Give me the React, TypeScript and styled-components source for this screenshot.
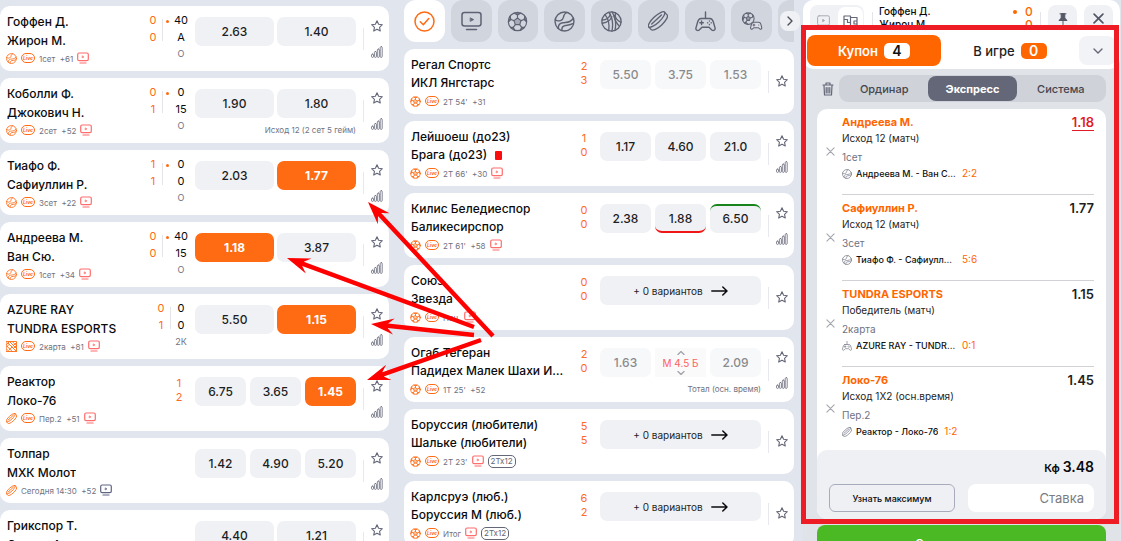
import React from 'react';
import styled, { createGlobalStyle, css } from 'styled-components';

const c = {
  page: '#e1e5ee',
  orange: '#ff6b13',
  deepOrange: '#ff6600',
  grey: '#6f7282',
  icon: '#646777',
  chip: '#f0f1f5',
  mark: '#ff0000',
};

const Global = createGlobalStyle`
  * { box-sizing: border-box; }
  body { margin: 0; background: ${c.page}; color: #0b0b0d; font-family: Inter, "Liberation Sans", sans-serif; font-size: 12px; }
  button, input { font: inherit; color: inherit; border: 0; margin: 0; padding: 0; background: none; }
  button { cursor: pointer; }
  svg { display: block; flex: none; fill: none; stroke: currentColor; stroke-linecap: round; stroke-linejoin: round; }
`;

/* ---------- icons ---------- */

type IconProps = { size?: number; w?: number };

const Tennis = ({ size = 11, w = 1.8 }: IconProps) => (
  <svg width={size} height={size} viewBox="0 0 24 24" strokeWidth={w}>
    <circle cx="12" cy="12" r="10.800" />
    <path d="M1.500 10c1.500 1.200 4 1.600 6.500.6 3-1.200 2.600-3.600 3.400-5.600.5-1.400 1.600-2.600 3.400-3.400" />
    <path d="M5 20c-.3-3.500 1.500-6 5-6.600 3-.5 5.500-.2 8-1.400 1.800-.9 3-2 4-3.400" />
    <path d="M9 22.300c-.3-3 1-5.300 4-5.800 3.500-.5 6-.5 8.500-2" />
  </svg>
);

const Soccer = ({ size = 11, w = 1.8 }: IconProps) => (
  <svg width={size} height={size} viewBox="0 0 24 24" strokeWidth={w}>
    <circle cx="12" cy="12" r="10.500" />
    <path d="M12 8l4 3-1.500 4.600h-5L8 11z" fill="currentColor" fillOpacity=".35" />
    <path d="M12 8V4.500M16 11l3.600-1.300M14.500 15.600l2.300 3.100M9.500 15.600l-2.300 3.100M8 11L4.400 9.700" />
    <path d="M8.500 2.500L12 4.500l3.500-2M20.500 6l-.9 3.700 2.700 2.800M19.800 18.700l-3-.1-1.600 3.400M8.800 22l-1.600-3.400-3 .1M1.700 12.500l2.700-2.800L3.500 6" fill="currentColor" />
  </svg>
);

const Basketball = ({ size = 21, w = 1.5 }: IconProps) => (
  <svg width={size} height={size} viewBox="0 0 24 24" strokeWidth={w}>
    <circle cx="12" cy="12" r="11" />
    <path d="M9 1.500c4 5.500 5 14 3.500 21.400M12.500 1c4 6 5 14 3.500 21" />
    <path d="M1.200 10.500C6 10 9.800 7 10.800 3.500M1.300 14c6-.8 10-3.500 11-7.500" />
    <path d="M4.500 4.200c4 4.500 5.300 11 4.300 18.300M16.500 2c-1 4.500 1 8.500 6.300 11M14.800 5c.5 5 3 9 6.200 12.500" />
  </svg>
);

const Puck = ({ size = 11, w = 1.8 }: IconProps) => (
  <svg width={size} height={size} viewBox="0 0 24 24" strokeWidth={w}>
    <g transform="rotate(-43 12 12)">
      <ellipse cx="12" cy="9.500" rx="13" ry="4" />
      <path d="M-1 9.500v4.500c0 2.500 5.800 4.500 13 4.500s13-2 13-4.500V9.500" />
      <path d="M4 9.500h16" />
    </g>
  </svg>
);

const Gamepad = ({ size = 20, w = 1.6 }: IconProps) => (
  <svg width={size} height={size} viewBox="0 0 24 24" strokeWidth={w}>
    <path d="M12 8.500V1M7 8.500h10c2 0 3.200 1.500 3.900 3.800l2 7c.6 2.400-1.900 4-3.700 2.400L16 18.500H8l-3.200 3.200C3 23.300.5 21.700 1.100 19.300l2-7C3.800 10 5 8.500 7 8.500z" />
    <path d="M7.500 11.500v4M5.500 13.500h4M16.500 11.400v.1M16.500 15.500v.1M14.500 13.500v.1M18.500 13.500v.1" />
  </svg>
);

const Mixed = () => (
  <svg width="22" height="20" viewBox="0 0 26 24" strokeWidth="1.3">
    <circle cx="8.500" cy="9" r="7" />
    <path d="M8.500 6.500l2.400 1.800-1 2.900H7.100l-1-2.900zM8.500 6.500V4M11 8.300l2.500-.8M7.100 11.200l-1.500 2M6 8.300l-2.500-.8M6 2.500L8.500 4 11 2.500M2 11l1.500-3.500L3 5M4 14.500l1.600-1.300 2 2.500M14 5l-.5 2.500" fill="currentColor" fillOpacity=".5" />
    <path d="M15 13.500h6c1.500 0 2.200.8 2.600 2.300l1.100 4.200c.3 1.500-1.200 2.400-2.300 1.400L20.500 20h-5l-1.900 1.400c-1.100 1-2.600.1-2.300-1.400l1.100-4.200c.4-1.500 1.100-2.300 2.600-2.300zM15.300 15.500v2.400M14.100 16.700h2.400M21 16.700h.1" fill={c.chip} fillOpacity=".35" />
  </svg>
);

const Tv = ({ size = 12, w = 1.2 }: IconProps) => (
  <svg width={size} height={size} viewBox="0 0 12 12" strokeWidth={w}>
    <rect x=".7" y="1" width="10.600" height="7.600" rx="1.400" />
    <path d="M3 11h6" />
    <path d="M5.500 4l1.500.9-1.500.9z" fill="currentColor" strokeWidth=".6" />
  </svg>
);

const Woven = () => (
  <svg width="11" height="11" viewBox="0 0 11 11" strokeWidth=".9">
    <rect x=".5" y=".5" width="10" height="10" />
    <path d="M.5 3.500l3-3M.5 6l2.500-2.500M2 2l8.500 8.500M4 1l6.500 6.500M6.500.8l4 4M.8 5l5.500 5.500M.5 8l2.500 2.500M7 5l3.500-3.500M8 7l2.500-2.500M3 9l3-3" />
  </svg>
);

const Star = () => (
  <svg width="12" height="12" viewBox="0 0 24 24" strokeWidth="2.200">
    <path d="M12 1.500l3.200 7 7.500.9-5.600 5.200 1.500 7.500L12 18.300l-6.600 3.800 1.500-7.500L1.300 9.400l7.500-.9z" />
  </svg>
);

const Bars = () => (
  <svg width="12" height="12" viewBox="0 0 12 12" strokeWidth=".8">
    <rect x=".5" y="8" width="2" height="3.400" rx="1" />
    <rect x="3.400" y="5.500" width="2" height="5.900" rx="1" />
    <rect x="6.300" y="3" width="2" height="8.400" rx="1" />
    <rect x="9.200" y=".6" width="2" height="10.800" rx="1" />
  </svg>
);

const Check = () => (
  <svg width="21" height="21" viewBox="0 0 21 21" strokeWidth="1.500">
    <circle cx="10.500" cy="10.500" r="9.500" />
    <path d="M6.300 10.800l3 3 5.500-6.300" />
  </svg>
);

const BigTv = () => (
  <svg width="21" height="20" viewBox="0 0 21 20" strokeWidth="1.500">
    <rect x="1" y="1.500" width="19" height="13.500" rx="2.500" />
    <path d="M5.500 18.500h10" />
    <path d="M9.500 7l3.200 1.600-3.200 1.600z" fill="currentColor" strokeWidth=".8" />
  </svg>
);

const Chevron = ({ d, w = 8, h = 12 }: { d: string; w?: number; h?: number }) => (
  <svg width={w} height={h} viewBox={`0 0 ${w} ${h}`} strokeWidth="1.400">
    <path d={d} />
  </svg>
);

const Arrow = () => (
  <svg width="17" height="10" viewBox="0 0 17 10" strokeWidth="1.500">
    <path d="M.8 5h15.200M11.800 1l4.200 4-4.200 4" />
  </svg>
);

const Trash = () => (
  <svg width="12" height="14" viewBox="0 0 12 14" strokeWidth="1.200">
    <path d="M1 3h10M4 2.800V1h4v1.800M2 3.200l.5 9.800h7l.5-9.800M4.200 5.500v5.500M6 5.500v5.500M7.800 5.500v5.500" />
  </svg>
);

const Pin = () => (
  <svg width="10" height="12" viewBox="0 0 10 12" strokeWidth="1">
    <path d="M2 .8h6M3.200 1v4L1 7.500h8L6.800 5V1z" fill="currentColor" />
    <path d="M5 7.500v4" />
  </svg>
);

const Cross = ({ size = 10, w = 1.6 }: IconProps) => (
  <svg width={size} height={size} viewBox="0 0 10 10" strokeWidth={w}>
    <path d="M1 1l8 8M9 1L1 9" />
  </svg>
);

const Pitch = () => (
  <svg width="15" height="12" viewBox="0 0 15 12" strokeWidth="1.200">
    <path d="M1 11V1h6.500v10M7.500 2.500h6.500V11M1 4.500h3.500v3H7.500M14 6h-3v3h3" />
  </svg>
);

const VideoBox = () => (
  <svg width="13" height="11" viewBox="0 0 13 11" strokeWidth="1">
    <rect x=".6" y=".8" width="11.800" height="9.400" rx="1.500" />
    <path d="M6 4.500l1.500 1L6 6.500z" fill="currentColor" />
  </svg>
);

/* ---------- page ---------- */

const Page = styled.div`
  position: relative;
  display: grid;
  grid-template-columns: minmax(0, 404fr) minmax(0, 399fr) 318px;
  height: 100vh;
  overflow: hidden;
`;

const Column = styled.main<{ $gutter: number; $top: number }>`
  min-width: 0;
  padding: ${(p) => p.$top}px ${(p) => p.$gutter}px 0 0;
`;

const Cards = styled.div`
  display: grid;
  gap: 7px;
`;

const Card = styled.article`
  display: grid;
  grid-template-columns: minmax(0, 1fr) auto 161px 33px;
  height: 65px;
  background: #fff;
  border-radius: 10px;
`;

const Info = styled.div<{ $dense?: boolean }>`
  display: grid;
  grid-template-rows: 44px 16px;
  min-width: 0;
  padding-left: 7px;
  line-height: ${(p) => (p.$dense ? 18 : 19)}px;
`;

const Teams = styled.div<{ $dense?: boolean }>`
  padding: ${(p) => (p.$dense ? 7 : 6)}px 12px 0 0;
  min-width: 0;
  font-size: 12px;
  font-weight: 500;
`;

const Team = styled.div`
  display: flex;
  align-items: center;
  gap: 8px;
  > span { overflow: hidden; text-overflow: ellipsis; white-space: nowrap; }
`;

const RedCard = styled.i`
  width: 7px;
  height: 9px;
  border-radius: 1px;
  background: #fb0d0d;
`;

const Meta = styled.div`
  display: flex;
  align-items: center;
  gap: 4px;
  margin-left: -1px;
  color: ${c.orange};
  font-size: 8px;
  line-height: 16px;
  white-space: nowrap;
`;

const Live = styled.span`
  width: 14px;
  height: 10px;
  border: 1px solid ${c.orange};
  border-radius: 5px;
  font-size: 5px;
  line-height: 8px;
  font-weight: 700;
  font-style: italic;
  text-align: center;
`;

const MetaText = styled.span`
  padding-top: 2px;
  color: ${c.grey};
  white-space: pre;
`;

const TvTone = styled.span<{ $dark?: boolean }>`
  color: ${(p) => (p.$dark ? '#5d6583' : '#ff6d6d')};
`;

const Tag = styled.span`
  height: 13px;
  padding: 0 2px;
  border: 1px solid ${c.icon};
  border-radius: 5px;
  color: ${c.icon};
  line-height: 11px;
`;

const Scores = styled.div`
  display: flex;
  padding: 6px 4px 0 0;
  font-size: 11px;
  line-height: 17px;
  text-align: center;
`;

const Games = styled.div`
  width: 14px;
  margin-right: 2px;
  color: ${c.orange};
`;

const Rule = styled.i`
  width: 1px;
  height: 22px;
  margin-top: 7px;
  background: #e3e5ea;
`;

const Serve = styled.i`
  width: 8px;
  padding: 8px 0 0 3px;
  &::before { content: ''; display: block; width: 3px; height: 3px; border-radius: 50%; background: ${c.orange}; }
`;

const Points = styled.div`
  width: 20px;
  small { display: block; font-size: 9px; color: ${c.grey}; line-height: 15px; }
`;

const Totals = styled.div`
  width: 24px;
  padding: 10px 8px 0 0;
  color: #ff6a2a;
  font-size: 11px;
  line-height: 14px;
  text-align: center;
`;

const Market = styled.div`
  padding-top: 11px;
`;

const Odds = styled.div<{ $three?: boolean }>`
  display: flex;
  gap: ${(p) => (p.$three ? 4 : 3)}px;
`;

type Tone = 'on' | 'off' | 'up' | 'down';

const Odd = styled.button<{ $tone?: Tone }>`
  flex: 1 1 0;
  height: 29px;
  border-radius: 7px;
  background: ${c.chip};
  font-size: 12px;
  font-weight: 500;
  color: #1d1e24;
  ${(p) => p.$tone === 'on' && css`background: ${c.orange}; color: #fff; font-weight: 700;`}
  ${(p) => p.$tone === 'off' && css`background: #f7f8fa; color: #8a8a8c;`}
  ${(p) => p.$tone === 'up' && css`border-top: 2px solid #17851c; border-bottom: 2px solid ${c.chip};`}
  ${(p) => p.$tone === 'down' && css`border-bottom: 2px solid #f01616; border-top: 2px solid ${c.chip};`}
`;

const Total = styled.div`
  display: flex;
  flex: 1 1 0;
  flex-direction: column;
  align-items: center;
  justify-content: center;
  height: 29px;
  background: #fafafa;
  color: #ff6262;
  font-size: 10px;
  line-height: 16px;
  svg { color: #a3a5ad; }
`;

const More = styled.button`
  display: flex;
  align-items: center;
  justify-content: center;
  gap: 8px;
  width: 100%;
  height: 29px;
  border-radius: 7px;
  background: ${c.chip};
  color: #1d1e24;
  font-size: 10px;
  svg { color: #0b0b0d; }
`;

const Note = styled.div`
  margin-top: 6px;
  color: ${c.grey};
  font-size: 8px;
  line-height: 12px;
  text-align: right;
  white-space: nowrap;
`;

const Actions = styled.div`
  display: grid;
  grid-template-columns: 1px 12px;
  column-gap: 7px;
  padding: 22px 0 0 7px;
  color: ${c.icon};
`;

const ActionRule = styled.i`
  height: 22px;
  background: #e7e9ee;
`;

const Stack = styled.div<{ $single?: boolean }>`
  display: flex;
  flex-direction: column;
  gap: 14px;
  margin-top: ${(p) => (p.$single ? 4 : -8)}px;
`;

type Row = {
  teams: [string, string];
  sport: 'tennis' | 'soccer' | 'puck' | 'esport';
  text: string;
  live?: boolean;
  tv?: 'live' | 'dark';
  tag?: boolean;
  red?: boolean;
  games?: [string, string];
  serve?: boolean;
  points?: [string, string, string];
  totals?: [string, string];
  odds?: [string, Tone?][];
  total?: string;
  note?: string;
  single?: boolean;
};

const sportIcon = { tennis: <Tennis />, soccer: <Soccer />, puck: <Puck />, esport: <Woven /> };

const Match = ({ r, dense }: { r: Row; dense?: boolean }) => (
  <Card>
    <Info $dense={dense}>
      <Teams $dense={dense}>
        <Team><span>{r.teams[0]}</span></Team>
        <Team><span>{r.teams[1]}</span>{r.red && <RedCard />}</Team>
      </Teams>
      <Meta>
        {sportIcon[r.sport]}
        {r.live !== false && <Live>Live</Live>}
        <MetaText>{r.text}</MetaText>
        {r.tv && <TvTone $dark={r.tv === 'dark'}><Tv /></TvTone>}
        {r.tag && <Tag>2Тх12</Tag>}
      </Meta>
    </Info>
    {r.games && r.points ? (
      <Scores>
        <Games><div>{r.games[0]}</div><div>{r.games[1]}</div></Games>
        <Rule />
        {r.serve && <Serve />}
        <Points><div>{r.points[0]}</div><div>{r.points[1]}</div><small>{r.points[2]}</small></Points>
      </Scores>
    ) : (
      <Totals>{r.totals?.map((t, i) => <div key={i}>{t}</div>)}</Totals>
    )}
    <Market>
      {r.odds ? (
        <Odds $three={r.odds.length === 3 || !!r.total}>
          {r.odds.map(([v, tone], i) => (
            <React.Fragment key={i}>
              {i === 1 && r.total && (
                <Total>
                  <Chevron w={8} h={4} d="M1 3.500l3-3 3 3" />
                  {r.total}
                  <Chevron w={8} h={4} d="M1 .5l3 3 3-3" />
                </Total>
              )}
              <Odd $tone={tone}>{v}</Odd>
            </React.Fragment>
          ))}
        </Odds>
      ) : (
        <More>+ 0 вариантов <Arrow /></More>
      )}
      {r.note && <Note>{r.note}</Note>}
    </Market>
    <Actions>
      <ActionRule />
      <Stack $single={r.single}>
        <button aria-label="В избранное"><Star /></button>
        {!r.single && <button aria-label="Статистика"><Bars /></button>}
      </Stack>
    </Actions>
  </Card>
);

const left: Row[] = [
  { teams: ['Гоффен Д.', 'Жирон М.'], sport: 'tennis', text: '1сет  +61', tv: 'live', games: ['0', '0'], serve: true, points: ['40', 'А', 'О'], odds: [['2.63'], ['1.40']] },
  { teams: ['Коболли Ф.', 'Джокович Н.'], sport: 'tennis', text: '2сет  +52', tv: 'live', games: ['0', '1'], serve: true, points: ['0', '15', 'О'], odds: [['1.90'], ['1.80']], note: 'Исход 12 (2 сет 5 гейм)' },
  { teams: ['Тиафо Ф.', 'Сафиуллин Р.'], sport: 'tennis', text: '3сет  +22', tv: 'live', games: ['1', '1'], serve: true, points: ['0', '0', 'О'], odds: [['2.03'], ['1.77', 'on']] },
  { teams: ['Андреева М.', 'Ван Сю.'], sport: 'tennis', text: '1сет  +34', tv: 'live', games: ['0', '0'], serve: true, points: ['40', '15', 'О'], odds: [['1.18', 'on'], ['3.87']] },
  { teams: ['AZURE RAY', 'TUNDRA ESPORTS'], sport: 'esport', text: '2карта  +81', tv: 'live', games: ['0', '1'], points: ['0', '0', '2К'], odds: [['5.50'], ['1.15', 'on']] },
  { teams: ['Реактор', 'Локо-76'], sport: 'puck', text: 'Пер.2  +51', tv: 'live', totals: ['1', '2'], odds: [['6.75'], ['3.65'], ['1.45', 'on']] },
  { teams: ['Толпар', 'МХК Молот'], sport: 'puck', text: 'Сегодня 14:30  +52', live: false, tv: 'dark', odds: [['1.42'], ['4.90'], ['5.20']] },
  { teams: ['Грикспор Т.', 'Сонего А.'], sport: 'tennis', text: '', live: false, odds: [['4.40'], ['1.21']] },
];

const middle: Row[] = [
  { teams: ['Регал Спортс', 'ИКЛ Янгстарс'], sport: 'soccer', text: "2Т 54'  +31", totals: ['2', '3'], odds: [['5.50', 'off'], ['3.75', 'off'], ['1.53', 'off']], single: true },
  { teams: ['Лейшоеш (до23)', 'Брага (до23)'], red: true, sport: 'soccer', text: "2Т 66'  +30", tv: 'live', totals: ['1', '0'], odds: [['1.17'], ['4.60'], ['21.0']] },
  { teams: ['Килис Беледиеспор', 'Баликесирспор'], sport: 'soccer', text: "2Т 61'  +58", tv: 'live', totals: ['0', '0'], odds: [['2.38'], ['1.88', 'down'], ['6.50', 'up']] },
  { teams: ['Союз', 'Звезда'], sport: 'soccer', text: 'Нач.', tv: 'live', totals: ['0', '0'], single: true },
  { teams: ['Огаб Тегеран', 'Падидех Малек Шахи Илам'], sport: 'soccer', text: "1Т 25'  +52", totals: ['2', '0'], odds: [['1.63', 'off'], ['2.09', 'off']], total: 'М 4.5 Б', note: 'Тотал (осн. время)' },
  { teams: ['Боруссия (любители)', 'Шальке (любители)'], sport: 'soccer', text: "2Т 23'", tv: 'live', tag: true, totals: ['5', '5'], single: true },
  { teams: ['Карлсруэ (люб.)', 'Боруссия М (люб.)'], sport: 'soccer', text: 'Итог', tv: 'live', tag: true, totals: ['6', '2'], single: true },
];

/* ---------- sports strip ---------- */

const Strip = styled.nav`
  position: relative;
  margin-bottom: 7px;
`;

const StripClip = styled.div`
  overflow: hidden;
`;

const StripRow = styled.div`
  display: grid;
  grid-template-columns: repeat(9, 1fr);
  gap: 6px;
  width: calc(100% + 25px);
`;

const SportTab = styled.button<{ $on?: boolean }>`
  display: grid;
  place-items: center;
  height: 42px;
  border-radius: 12px;
  background: ${(p) => (p.$on ? '#fff' : '#d1d5de')};
  color: ${(p) => (p.$on ? c.orange : '#5f6272')};
`;

const NextButton = styled.button`
  position: absolute;
  right: -6px;
  top: 11px;
  display: grid;
  place-items: center;
  width: 20px;
  height: 20px;
  border-radius: 8px;
  background: #f0f1f5;
  color: #4c4f5c;
`;

/* ---------- coupon ---------- */

const Side = styled.aside`
  display: flex;
  flex-direction: column;
  margin-right: 1px;
  min-height: 0;
`;

const Topbar = styled.header`
  display: flex;
  flex: none;
  height: 28px;
  padding: 5px 7px 0;
  overflow: hidden;
  background: #fff;
  border-radius: 10px 10px 0 0;
`;

const Toggle = styled.div`
  display: flex;
  width: 54px;
  height: 30px;
  margin-right: 3px;
  border-radius: 8px;
  background: ${c.chip};
`;

const ToggleItem = styled.button<{ $on?: boolean }>`
  display: flex;
  align-items: flex-start;
  justify-content: center;
  flex: 1;
  margin: 2px 1px;
  padding-top: 8px;
  border-radius: 7px;
  background: ${(p) => (p.$on ? '#fff' : 'transparent')};
  color: ${(p) => (p.$on ? c.icon : '#a9abb5')};
`;

const TopRule = styled.i`
  width: 1px;
  margin: 7px 0 0 5px;
  background: #e3e5ea;
`;

const TopTeams = styled.div`
  flex: 1;
  padding-left: 6px;
  font-size: 10px;
  font-weight: 500;
  line-height: 13px;
`;

const TopScore = styled.div`
  display: grid;
  grid-template-columns: 12px 10px;
  align-content: start;
  align-items: center;
  color: ${c.deepOrange};
  font-size: 12px;
  font-weight: 500;
  line-height: 13px;
  i { width: 4px; height: 4px; border-radius: 50%; background: ${c.deepOrange}; }
  span { grid-column: 2; }
`;

const TopButton = styled.button`
  display: flex;
  justify-content: center;
  width: 29px;
  height: 30px;
  padding-top: 8px;
  margin-left: 7px;
  border-radius: 8px;
  background: ${c.chip};
  color: #555867;
`;

const Coupon = styled.section`
  position: relative;
  background: #e0e3e8;
`;

const Frame = styled.div`
  position: absolute;
  inset: -3px 1px -5px -2px;
  border: 5px solid #ee1c25;
  pointer-events: none;
`;

const CouponTabs = styled.div`
  display: grid;
  grid-template-columns: 134px 1fr 37px;
  align-items: center;
  height: 41px;
  padding: 4px 4px 0;
  background: #fff;
  border-radius: 0 0 10px 10px;
`;

const CouponTab = styled.button<{ $on?: boolean }>`
  display: flex;
  align-items: center;
  justify-content: center;
  gap: 6px;
  height: 31px;
  border-radius: 8px;
  background: ${(p) => (p.$on ? c.deepOrange : 'transparent')};
  color: ${(p) => (p.$on ? '#fff' : '#1d1e24')};
  font-size: 13px;
  font-weight: ${(p) => (p.$on ? 600 : 500)};
`;

const Count = styled.span<{ $on?: boolean }>`
  width: 26px;
  height: 16px;
  border-radius: 5px;
  background: ${(p) => (p.$on ? '#fff' : c.deepOrange)};
  color: ${(p) => (p.$on ? '#111' : '#fff')};
  font-size: 14px;
  line-height: 16px;
  font-weight: 600;
`;

const Collapse = styled.button`
  display: grid;
  place-items: center;
  height: 29px;
  border-radius: 8px;
  background: #f2f3f6;
  color: ${c.icon};
`;

const Kinds = styled.div`
  display: flex;
  align-items: center;
  gap: 5px;
  padding: 6px 14px 7px 19px;
  color: ${c.icon};
`;

const Segments = styled.div`
  display: grid;
  flex: 1;
  grid-template-columns: repeat(3, 1fr);
  height: 27px;
  padding: 1px;
  border-radius: 9px;
  background: #cfd2d8;
`;

const Segment = styled.button<{ $on?: boolean }>`
  border-radius: 8px;
  background: ${(p) => (p.$on ? '#646777' : 'transparent')};
  color: ${(p) => (p.$on ? '#fff' : '#44464f')};
  font-size: 11px;
  font-weight: ${(p) => (p.$on ? 700 : 500)};
`;

const Slip = styled.div`
  margin: 0 14px;
  border-radius: 10px;
  overflow: hidden;
  background: #fff;
`;

const Bet = styled.div`
  display: grid;
  grid-template-columns: 25px minmax(0, 1fr);
  padding-right: 12px;
`;

const Remove = styled.button`
  padding: 0 0 1px 9px;
  color: #a3a5ad;
`;

const BetBody = styled.div<{ $last?: boolean }>`
  height: ${(p) => (p.$last ? 83 : 86)}px;
  padding-top: 5px;
  border-bottom: 1px solid ${(p) => (p.$last ? 'transparent' : '#d0d2d5')};
  font-size: 10px;
`;

const BetHead = styled.div`
  display: flex;
  justify-content: space-between;
  align-items: flex-start;
  color: ${c.deepOrange};
  font-size: 11px;
  line-height: 16px;
  font-weight: 700;
`;

const Price = styled.span<{ $hot?: boolean }>`
  color: ${(p) => (p.$hot ? '#e01b26' : '#1d1e24')};
  font-size: 13px;
  font-weight: 600;
  border-bottom: 1px solid ${(p) => (p.$hot ? '#e01b26' : 'transparent')};
`;

const BetLine = styled.div`
  color: #1d1e24;
  line-height: 15px;
`;

const Stage = styled.div`
  padding-top: 3px;
  color: ${c.grey};
  line-height: 16px;
`;

const Event = styled.div`
  display: flex;
  align-items: center;
  gap: 4px;
  line-height: 16px;
  color: ${c.grey};
  font-size: 9px;
  font-weight: 500;
  b { max-width: 100px; overflow: hidden; text-overflow: ellipsis; white-space: nowrap; color: #111; font-weight: 500; }
  em { padding: 0 0 2px 2px; color: ${c.deepOrange}; font-style: normal; font-size: 10px; font-weight: 400; }
`;

const Footer = styled.div`
  display: grid;
  grid-template-columns: 1fr 1fr;
  gap: 7px 13px;
  height: 69px;
  padding: 8px 12px;
  border-radius: 10px;
  background: #eff0f4;
  align-content: start;
`;

const Coef = styled.div`
  grid-column: 1 / -1;
  font-size: 11px;
  font-weight: 600;
  line-height: 18px;
  text-align: right;
  b { font-size: 14px; font-weight: 600; }
`;

const MaxButton = styled.button`
  height: 28px;
  border: 1px solid #a8abbb;
  border-radius: 6px;
  font-size: 9px;
  font-weight: 500;
`;

const Stake = styled.input`
  min-width: 0;
  width: 100%;
  height: 28px;
  padding: 0 10px;
  border-radius: 8px;
  background: #fff;
  font-size: 13px;
  text-align: right;
  &::placeholder { color: #7b7c82; opacity: 1; }
`;

const Rest = styled.div`
  flex: 1;
  min-height: 0;
  padding: 6px 14px 0;
  background: #e0e3e8;
`;

const Submit = styled.button`
  width: 100%;
  height: 36px;
  border-radius: 8px;
  background: #4ab924;
  color: #fff;
  font-size: 12px;
  font-weight: 500;
`;

const bets = [
  { name: 'Андреева М.', price: '1.18', hot: true, line: 'Исход 12 (матч)', stage: '1сет', icon: <Tennis size={10} w={1.6} />, event: 'Андреева М. - Ван Сю.', score: '2:2' },
  { name: 'Сафиуллин Р.', price: '1.77', line: 'Исход 12 (матч)', stage: '3сет', icon: <Tennis size={10} w={1.6} />, event: 'Тиафо Ф. - Сафиуллин Р.', score: '5:6' },
  { name: 'TUNDRA ESPORTS', price: '1.15', line: 'Победитель (матч)', stage: '2карта', icon: <Gamepad size={10} w={1.6} />, event: 'AZURE RAY - TUNDRA ESPORTS', score: '0:1' },
  { name: 'Локо-76', price: '1.45', line: 'Исход 1X2 (осн.время)', stage: 'Пер.2', icon: <Puck size={10} w={1.6} />, event: 'Реактор - Локо-76', score: '1:2' },
];

/* ---------- pointer arrows over the lists ---------- */

const Overlay = styled.svg`
  position: absolute;
  left: 0;
  top: 0;
  pointer-events: none;
`;

const pointers = [
  [493, 336, 368, 202],
  [474, 327, 287, 258],
  [474, 335, 371, 324],
  [481, 340, 367, 380],
];

const Pointer = ({ p }: { p: number[] }) => {
  const [x1, y1, x2, y2] = p;
  const len = Math.hypot(x2 - x1, y2 - y1);
  const angle = (Math.atan2(y2 - y1, x2 - x1) * 180) / Math.PI;
  return (
    <g transform={`translate(${x1} ${y1}) rotate(${angle})`}>
      <path
        d={`M0 -2.200H${len - 17}L${len - 23} -8L${len} 0L${len - 23} 8L${len - 17} 2.200H0z`}
        fill={c.mark}
        stroke="none"
      />
    </g>
  );
};

export default function App() {
  return (
    <>
      <Global />
      <Page>
        <Column $gutter={15} $top={6}>
          <Cards>{left.map((r) => <Match key={r.teams[0]} r={r} />)}</Cards>
        </Column>
        <Column as="section" $gutter={9} $top={0}>
          <Strip>
            <StripClip>
              <StripRow>
                <SportTab $on aria-label="Все"><Check /></SportTab>
                <SportTab aria-label="Трансляции"><BigTv /></SportTab>
                <SportTab aria-label="Футбол"><Soccer size={21} w={1.3} /></SportTab>
                <SportTab aria-label="Теннис"><Tennis size={21} w={1.6} /></SportTab>
                <SportTab aria-label="Баскетбол"><Basketball /></SportTab>
                <SportTab aria-label="Хоккей"><Puck size={20} w={1.6} /></SportTab>
                <SportTab aria-label="Киберспорт"><Gamepad size={21} /></SportTab>
                <SportTab aria-label="Киберфутбол"><Mixed /></SportTab>
                <SportTab aria-label="Другое" />
              </StripRow>
            </StripClip>
            <NextButton aria-label="Дальше"><Chevron w={8} h={12} d="M2 2l4 4-4 4" /></NextButton>
          </Strip>
          <Cards>{middle.map((r) => <Match key={r.teams[0]} r={r} dense />)}</Cards>
        </Column>
        <Side>
          <Topbar>
            <Toggle>
              <ToggleItem aria-label="Видео"><VideoBox /></ToggleItem>
              <ToggleItem $on aria-label="Поле"><Pitch /></ToggleItem>
            </Toggle>
            <TopRule />
            <TopTeams><div>Гоффен Д.</div><div>Жирон М.</div></TopTeams>
            <TopScore><i /><span>0</span><span>0</span></TopScore>
            <TopRule />
            <TopButton aria-label="Закрепить"><Pin /></TopButton>
            <TopButton aria-label="Закрыть"><Cross size={11} /></TopButton>
          </Topbar>
          <Coupon>
            <CouponTabs>
              <CouponTab $on>Купон <Count $on>4</Count></CouponTab>
              <CouponTab>В игре <Count>0</Count></CouponTab>
              <Collapse aria-label="Свернуть"><Chevron w={10} h={6} d="M1 1l4 4 4-4" /></Collapse>
            </CouponTabs>
            <Kinds>
              <button aria-label="Очистить"><Trash /></button>
              <Segments>
                <Segment>Ординар</Segment>
                <Segment $on>Экспресс</Segment>
                <Segment>Система</Segment>
              </Segments>
            </Kinds>
            <Slip>
              {bets.map((b, i) => (
                <Bet key={b.name}>
                  <Remove aria-label="Удалить"><Cross size={9} w={1.2} /></Remove>
                  <BetBody $last={i === bets.length - 1}>
                    <BetHead><span>{b.name}</span><Price $hot={b.hot}>{b.price}</Price></BetHead>
                    <BetLine>{b.line}</BetLine>
                    <Stage>{b.stage}</Stage>
                    <Event>{b.icon}<b>{b.event}</b><em>{b.score}</em></Event>
                  </BetBody>
                </Bet>
              ))}
              <Footer>
                <Coef>Кф <b>3.48</b></Coef>
                <MaxButton>Узнать максимум</MaxButton>
                <Stake aria-label="Ставка" placeholder="Ставка" />
              </Footer>
            </Slip>
            <Frame />
          </Coupon>
          <Rest><Submit>Сделать ставку</Submit></Rest>
        </Side>
        <Overlay width="1121" height="541" viewBox="0 0 1121 541">
          {pointers.map((p) => <Pointer key={p[0] + '-' + p[1]} p={p} />)}
        </Overlay>
      </Page>
    </>
  );
}
